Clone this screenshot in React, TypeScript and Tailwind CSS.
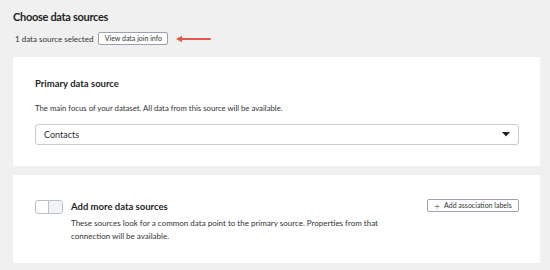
import React from "react";

export default function App() {
  const font = { fontFamily: 'Lato, "Liberation Sans", sans-serif' };
  return (
    <div className="w-[550px] h-[270px] bg-[#f0f0f0] text-[#2e2e2e] overflow-hidden" style={font}>
      <div className="pl-[13px] pr-[10px]">
        <h1 className="pt-[8px] h-[29px] text-[11px] leading-[17px] font-bold tracking-[-0.3px] text-[#1f1f1f]">Choose data sources</h1>
        <div className="flex items-center h-[19px]">
          <span className="ml-[2px] text-[8px] text-[#333]">1 data source selected</span>
          <button className="ml-[5px] h-[13px] w-[70px] border border-[#9aa3ad] rounded-[2px] bg-white text-[7px] text-[#333] leading-none">View data join info</button>
          <svg width="38" height="8" viewBox="0 0 38 8" className="ml-[7px]">
            <line x1="4" y1="4" x2="35" y2="4" stroke="#e2574c" strokeWidth="2" strokeLinecap="round" />
            <path d="M1 4 L7 0.8 L7 7.2 Z" fill="#e2574c" />
          </svg>
        </div>
        <div className="mt-[9px] w-[527px] h-[109px] bg-white pl-[22px] pr-[21px] pt-[20px]">
          <div className="text-[9.5px] font-bold leading-[14px] text-[#1f1f1f]">Primary data source</div>
          <div className="mt-[12px] text-[7.75px] leading-[10px] text-[#333]">The main focus of your dataset. All data from this source will be available.</div>
          <div className="mt-[11px] h-[21px] border border-[#c5ccd3] rounded-[3px] flex items-center justify-between pl-[8px] pr-[8px]">
            <span className="text-[9px] text-[#2e2e2e]">Contacts</span>
            <svg width="8" height="5" viewBox="0 0 8 5"><path d="M0 0 L8 0 L4 4.5 Z" fill="#222" /></svg>
          </div>
        </div>
        <div className="mt-[9px] w-[527px] h-[88px] bg-white pl-[22px] pr-[21px] pt-[25px] flex">
          <div className="w-[28px] h-[14px] border border-[#b8c0c8] rounded-[3px] flex">
            <div className="w-[13px] h-full border-r border-[#b8c0c8]" />
            <div className="flex-1 bg-[#f3f3f3] rounded-r-[3px]" />
          </div>
          <div className="ml-[8px] flex-1">
            <div className="text-[9.5px] font-bold leading-[14px] text-[#1f1f1f]">Add more data sources</div>
            <div className="mt-[2.5px] w-[325px] text-[8px] leading-[13px] text-[#333]">These sources look for a common data point to the primary source. Properties from that connection will be available.</div>
          </div>
          <button className="-mt-[1px] h-[13px] w-[92px] border border-[#9aa3ad] rounded-[2px] bg-white text-[7px] text-[#333] leading-none flex items-center justify-center gap-[4px]">
            <span className="text-[10px] font-light leading-none">+</span>
            <span>Add association labels</span>
          </button>
        </div>
      </div>
    </div>
  );
}
